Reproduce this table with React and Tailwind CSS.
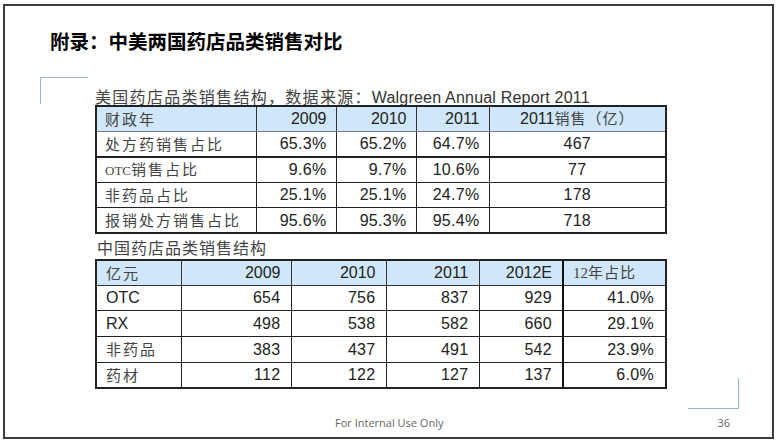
import React from "react";

const cjk = { fontFamily: '"Noto Sans CJK SC", sans-serif' };

const us = {
  head: ["财政年", "2009", "2010", "2011", "2011销售（亿）"],
  rows: [
    ["处方药销售占比", "65.3%", "65.2%", "64.7%", "467"],
    ["OTC销售占比", "9.6%", "9.7%", "10.6%", "77"],
    ["非药品占比", "25.1%", "25.1%", "24.7%", "178"],
    ["报销处方销售占比", "95.6%", "95.3%", "95.4%", "718"],
  ],
};

const cn = {
  head: ["亿元", "2009", "2010", "2011", "2012E", "12年占比"],
  rows: [
    ["OTC", "654", "756", "837", "929", "41.0%"],
    ["RX", "498", "538", "582", "660", "29.1%"],
    ["非药品", "383", "437", "491", "542", "23.9%"],
    ["药材", "112", "122", "127", "137", "6.0%"],
  ],
};

function Label({ text }) {
  const isLatin = /^[A-Za-z]+$/.test(text);
  if (isLatin)
    return (
      <span className="font-['Liberation_Sans',sans-serif] text-[16px] text-[#222]">{text}</span>
    );
  return (
    <span className="font-['Noto_Sans_CJK_SC',sans-serif] text-[15px] tracking-[2px] text-[#444]">
      {text.split(/(OTC)/).map((p, i) =>
        p === "OTC" ? (
          <span key={i} className="font-['Liberation_Serif',serif] text-[13px] tracking-normal">
            OTC
          </span>
        ) : (
          <React.Fragment key={i}>{p}</React.Fragment>
        )
      )}
    </span>
  );
}

function UsTable() {
  const widths = ["w-[160px]", "w-[80px]", "w-[80px]", "w-[73px]", "w-[177px]"];
  return (
    <table className="table-fixed border-collapse border-2 border-[#222] w-[570px]">
      <colgroup>
        {widths.map((w, i) => (
          <col key={i} className={w} />
        ))}
      </colgroup>
      <thead>
        <tr className="h-[25px] bg-[#cfe7f8]">
          {us.head.map((h, i) => (
            <th
              key={i}
              className={
                "p-0 leading-[20px] font-normal border border-[#333] border-b-[#6f8090] " +
                (i === 0 ? "text-left pl-[8px]" : i === 4 ? "text-center" : "text-right pr-[9px]")
              }
            >
              {i === 0 ? (
                <Label text={h} />
              ) : i === 4 ? (
                <span className="font-['Liberation_Sans',sans-serif] text-[16px] text-[#222]">
                  2011
                  <span className="font-['Noto_Sans_CJK_SC',sans-serif] text-[15px] text-[#444] tracking-[1px]">
                    销售（亿）
                  </span>
                </span>
              ) : (
                <span className="font-['Liberation_Sans',sans-serif] text-[16px] text-[#222]">{h}</span>
              )}
            </th>
          ))}
        </tr>
      </thead>
      <tbody>
        {us.rows.map((r, ri) => (
          <tr key={ri} className="h-[25.5px]">
            {r.map((c, i) => (
              <td
                key={i}
                className={
                  "p-0 leading-[20px] border border-[#222] " +
                  (ri === 0 ? "border-b-2 " : "") +
                  (i === 0 ? "text-left pl-[8px]" : i === 4 ? "text-center" : "text-right pr-[9px]")
                }
              >
                {i === 0 ? (
                  <Label text={c} />
                ) : (
                  <span className="font-['Liberation_Sans',sans-serif] text-[16px] text-[#222] tracking-[0.3px]">
                    {c}
                  </span>
                )}
              </td>
            ))}
          </tr>
        ))}
      </tbody>
    </table>
  );
}

function CnTable() {
  const widths = ["w-[85px]", "w-[110px]", "w-[95px]", "w-[93px]", "w-[84px]", "w-[103px]"];
  return (
    <table className="table-fixed border-collapse border-2 border-[#222] w-[570px]">
      <colgroup>
        {widths.map((w, i) => (
          <col key={i} className={w} />
        ))}
      </colgroup>
      <thead>
        <tr className="h-[25px] bg-[#cfe7f8]">
          {cn.head.map((h, i) => (
            <th
              key={i}
              className={
                "p-0 leading-[20px] font-normal border border-[#333] " +
                (i === 5 ? "border-l-2 border-l-[#111] " : "") +
                (i === 0 ? "text-left pl-[9px]" : i === 5 ? "text-left pl-[9px]" : "text-right pr-[10px]")
              }
            >
              {i === 0 ? (
                <Label text={h} />
              ) : i === 5 ? (
                <span className="font-['Noto_Sans_CJK_SC',sans-serif] text-[15px] text-[#444] tracking-[1px]">
                  <span className="font-['Liberation_Serif',serif] text-[15px] tracking-normal">12</span>年占比
                </span>
              ) : (
                <span className="font-['Liberation_Sans',sans-serif] text-[16px] text-[#222]">{h}</span>
              )}
            </th>
          ))}
        </tr>
      </thead>
      <tbody>
        {cn.rows.map((r, ri) => (
          <tr key={ri} className="h-[25.7px]">
            {r.map((c, i) => (
              <td
                key={i}
                className={
                  "p-0 leading-[20px] border border-[#222] " +
                  (i === 5 ? "border-l-2 border-l-[#111] " : "") +
                  (i === 0 ? "text-left pl-[9px]" : i === 5 ? "text-right pr-[11px]" : "text-right pr-[10px]")
                }
              >
                {i === 0 ? (
                  <Label text={c} />
                ) : (
                  <span className="font-['Liberation_Sans',sans-serif] text-[16px] text-[#222] tracking-[0.3px]">
                    {c}
                  </span>
                )}
              </td>
            ))}
          </tr>
        ))}
      </tbody>
    </table>
  );
}

export default function App() {
  return (
    <div className="w-[778px] h-[441px] bg-white pt-[4px] pl-[3px]">
      <div className="relative w-[771px] h-[435px] border-2 border-[#3c3c3c] flex flex-col">
        <div className="absolute left-[35px] top-[71px] w-[48px] h-[27px] border-l border-t border-[#9db1c6]" />
        <div className="absolute left-[683px] top-[372px] w-[51px] h-[31px] border-r border-b border-[#9db1c6]" />

        <div
          className="mt-[21px] pl-[45px] h-[28px] leading-[28px] text-[19.5px] font-semibold text-black"
          style={cjk}
        >
          附录：中美两国药店品类销售对比
        </div>

        <div className="pl-[90px] mt-[32px] flex flex-col">
          <div className="h-[18px] leading-[18px] text-[#444] whitespace-nowrap">
            <span className="font-['Noto_Sans_CJK_SC',sans-serif] text-[16px] tracking-[1.3px]">
              美国药店品类销售结构，数据来源：
            </span>
            <span className="font-['Liberation_Sans',sans-serif] text-[16px] text-[#333] tracking-[0.2px]">
              Walgreen Annual Report 2011
            </span>
          </div>
          <div className="mt-0">
            <UsTable />
          </div>
          <div className="mt-[4px] pl-[2px] h-[18px] leading-[18px] text-[#444] font-['Noto_Sans_CJK_SC',sans-serif] text-[16px] tracking-[1px]">
            中国药店品类销售结构
          </div>
          <div className="mt-[3px]">
            <CnTable />
          </div>
        </div>

        <div className="mt-auto pb-[7px] flex items-center h-[14px] leading-[14px] box-content font-['Open_Sans',sans-serif] text-[11px] text-[#666]">
          <span className="ml-[330px]">For Internal Use Only</span>
          <span className="ml-auto mr-[42px]">36</span>
        </div>
      </div>
    </div>
  );
}
